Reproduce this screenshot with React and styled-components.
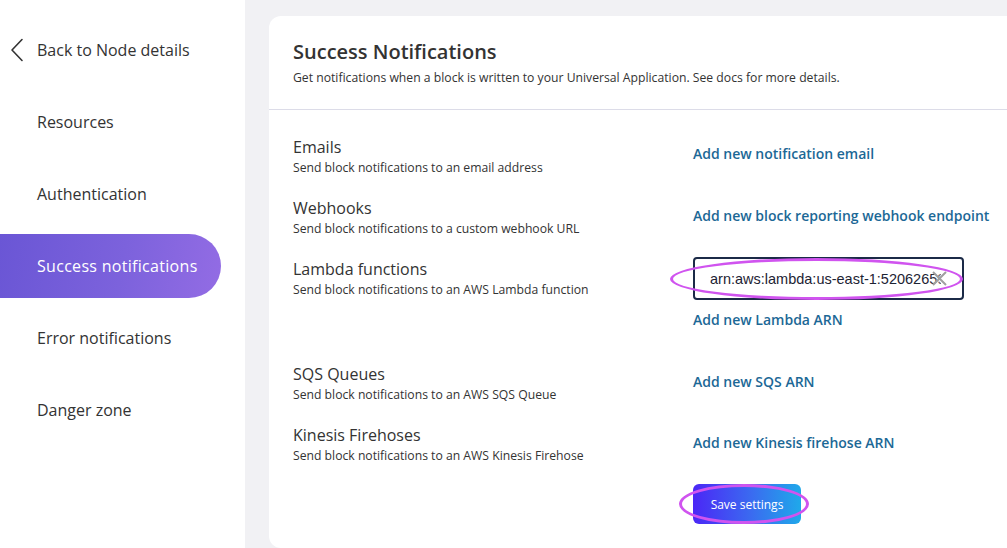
import styled, { createGlobalStyle } from "styled-components";

const GlobalStyle = createGlobalStyle`
    html, body {
        margin: 0;
        padding: 0;
        height: 100%;
        overflow: hidden;
    }
    body {
        font-family: 'Open Sans', 'Noto Sans', sans-serif;
        color: #333;
        background-color: #f1f1f4;
    }
`

const Page = styled.div`
    display: flex;
    height: 548px;
    width: 1007px;
    overflow: hidden;
`

const Sidebar = styled.nav`
    width: 245px;
    flex-shrink: 0;
    background-color: white;
    padding-top: 28px;
    box-sizing: border-box;
`

const BackLink = styled.a`
    display: flex;
    align-items: center;
    height: 44px;
    padding-left: 10px;
    gap: 13px;
    font-size: 16px;
    color: #333;
    text-decoration: none;
    margin-bottom: 18px;
`

const NavItem = styled.a`
    display: flex;
    align-items: center;
    height: 64px;
    width: 221px;
    padding-left: 37px;
    box-sizing: border-box;
    margin-bottom: 8px;
    font-size: 16px;
    letter-spacing: ${p => p.$active ? "0.3px" : "0"};
    text-decoration: none;
    color: ${p => p.$active ? "white" : "#333"};
    border-radius: 0 32px 32px 0;
    background: ${p => p.$active ? "linear-gradient(100deg, #6a56d5 0%, #7c62dc 55%, #936ce4 100%)" : "transparent"};
`

const Main = styled.main`
    flex: 1;
    min-width: 0;
    padding: 16px 0 0 24px;
`

const Card = styled.section`
    background-color: white;
    border-radius: 12px 0 0 12px;
    height: 532px;
    box-sizing: border-box;
`

const Header = styled.header`
    padding: 22px 24px 0;
    height: 94px;
    box-sizing: border-box;
    border-bottom: 1px solid #dcdce8;
`

const Title = styled.h1`
    margin: 0;
    font-size: 20px;
    font-weight: 600;
    line-height: 28px;
    color: #333;
`

const Subtitle = styled.p`
    margin: 3px 0 0;
    font-size: 12.2px;
    line-height: 18px;
    color: #333;
    white-space: nowrap;
`

const Body = styled.div`
    padding: 26px 0 0 24px;
    display: flex;
    flex-direction: column;
    gap: 21px;
`

const Row = styled.div`
    display: grid;
    grid-template-columns: 400px 1fr;
    align-items: ${p => p.$top ? "start" : "center"};
`

const RowTitle = styled.h2`
    margin: 0;
    font-size: 16px;
    font-weight: 500;
    line-height: 22px;
    color: #333;
`

const RowText = styled.p`
    margin: 1px 0 -1px;
    font-size: 12.2px;
    line-height: 18px;
    color: #333;
`

const Actions = styled.div`
    display: flex;
    flex-direction: column;
    align-items: flex-start;
    gap: 10px;
    margin-top: ${p => p.$shift || 0}px;
    margin-bottom: ${p => p.$bottom || 0}px;
`

const Link = styled.a`
    font-size: 14px;
    font-weight: 600;
    line-height: 20px;
    color: #1c6896;
    text-decoration: none;
    white-space: nowrap;
    cursor: pointer;
`

const InputWrap = styled.div`
    position: relative;
    width: 271px;
    height: 43px;
    border: 2px solid #1b2a47;
    border-radius: 4px;
    box-sizing: border-box;
    display: flex;
    align-items: center;
    overflow: hidden;
`

const Input = styled.input`
    border: none;
    outline: none;
    background: transparent;
    width: 231px;
    margin-left: 15px;
    padding: 0;
    font-family: 'Liberation Sans', Arial, sans-serif;
    font-size: 14.5px;
    color: #1d2333;
`

const Clear = styled.span`
    position: absolute;
    right: 14px;
    top: 11px;
    display: flex;
    background: linear-gradient(90deg, rgba(255,255,255,0) 0%, rgba(255,255,255,0.6) 100%);
`

const SaveButton = styled.button`
    width: 108px;
    height: 40px;
    border: none;
    border-radius: 6px;
    background: linear-gradient(90deg, #4b27f6 0%, #3a6cf0 55%, #1fa9ea 100%);
    color: white;
    font-family: 'Open Sans', sans-serif;
    font-size: 12px;
    font-weight: 500;
    margin-left: 400px;
    margin-top: -1px;
    cursor: pointer;
`

const Highlight = styled.span`
    position: absolute;
    border: 3.5px solid #d054ef;
    border-radius: 50%;
    pointer-events: none;
    box-sizing: border-box;
    left: ${p => p.$left}px;
    top: ${p => p.$top}px;
    width: ${p => p.$width}px;
    height: ${p => p.$height}px;
`

const Relative = styled.div`
    position: relative;
`

const rows = [
    { title: "Emails", text: "Send block notifications to an email address", link: "Add new notification email", shift: -4 },
    { title: "Webhooks", text: "Send block notifications to a custom webhook URL", link: "Add new block reporting webhook endpoint", shift: -2 },
    { title: "Lambda functions", text: "Send block notifications to an AWS Lambda function", link: "Add new Lambda ARN", input: "arn:aws:lambda:us-east-1:520626599001:function:notify" },
    { title: "SQS Queues", text: "Send block notifications to an AWS SQS Queue", link: "Add new SQS ARN", shift: -2 },
    { title: "Kinesis Firehoses", text: "Send block notifications to an AWS Kinesis Firehose", link: "Add new Kinesis firehose ARN", shift: -2 },
]

const navItems = ["Resources", "Authentication", "Success notifications", "Error notifications", "Danger zone"]

const App = () => {
    return (
        <Page>
            <GlobalStyle />
            <Sidebar>
                <BackLink>
                    <svg width="14" height="24" viewBox="0 0 14 24" fill="none">
                        <path d="M12 1.5 L2 12 L12 22.5" stroke="#333" strokeWidth="1.6" strokeLinecap="round" strokeLinejoin="round" />
                    </svg>
                    Back to Node details
                </BackLink>
                {navItems.map(item => (
                    <NavItem key={item} $active={item === "Success notifications"}>{item}</NavItem>
                ))}
            </Sidebar>
            <Main>
                <Card>
                    <Header>
                        <Title>Success Notifications</Title>
                        <Subtitle>Get notifications when a block is written to your Universal Application. See docs for more details.</Subtitle>
                    </Header>
                    <Body>
                        {rows.map(row => (
                            <Row key={row.title} $top={Boolean(row.input)}>
                                <div>
                                    <RowTitle>{row.title}</RowTitle>
                                    <RowText>{row.text}</RowText>
                                </div>
                                {row.input ? (
                                    <Relative>
                                        <Actions $shift={-1} $bottom={12}>
                                            <InputWrap>
                                                <Input defaultValue={row.input} readOnly />
                                                <Clear>
                                                    <svg width="17" height="17" viewBox="0 0 17 17">
                                                        <path d="M2 2 L15 15 M15 2 L2 15" stroke="#a0a0a0" strokeWidth="2" />
                                                    </svg>
                                                </Clear>
                                            </InputWrap>
                                            <Link>{row.link}</Link>
                                        </Actions>
                                        <Highlight $left={-23} $top={0} $width={293} $height={42} />
                                    </Relative>
                                ) : (
                                    <Actions $shift={row.shift}>
                                        <Link>{row.link}</Link>
                                    </Actions>
                                )}
                            </Row>
                        ))}
                        <Relative>
                            <SaveButton>Save settings</SaveButton>
                            <Highlight $left={386} $top={-1} $width={130} $height={40} />
                        </Relative>
                    </Body>
                </Card>
            </Main>
        </Page>
    )
}

export default App;
